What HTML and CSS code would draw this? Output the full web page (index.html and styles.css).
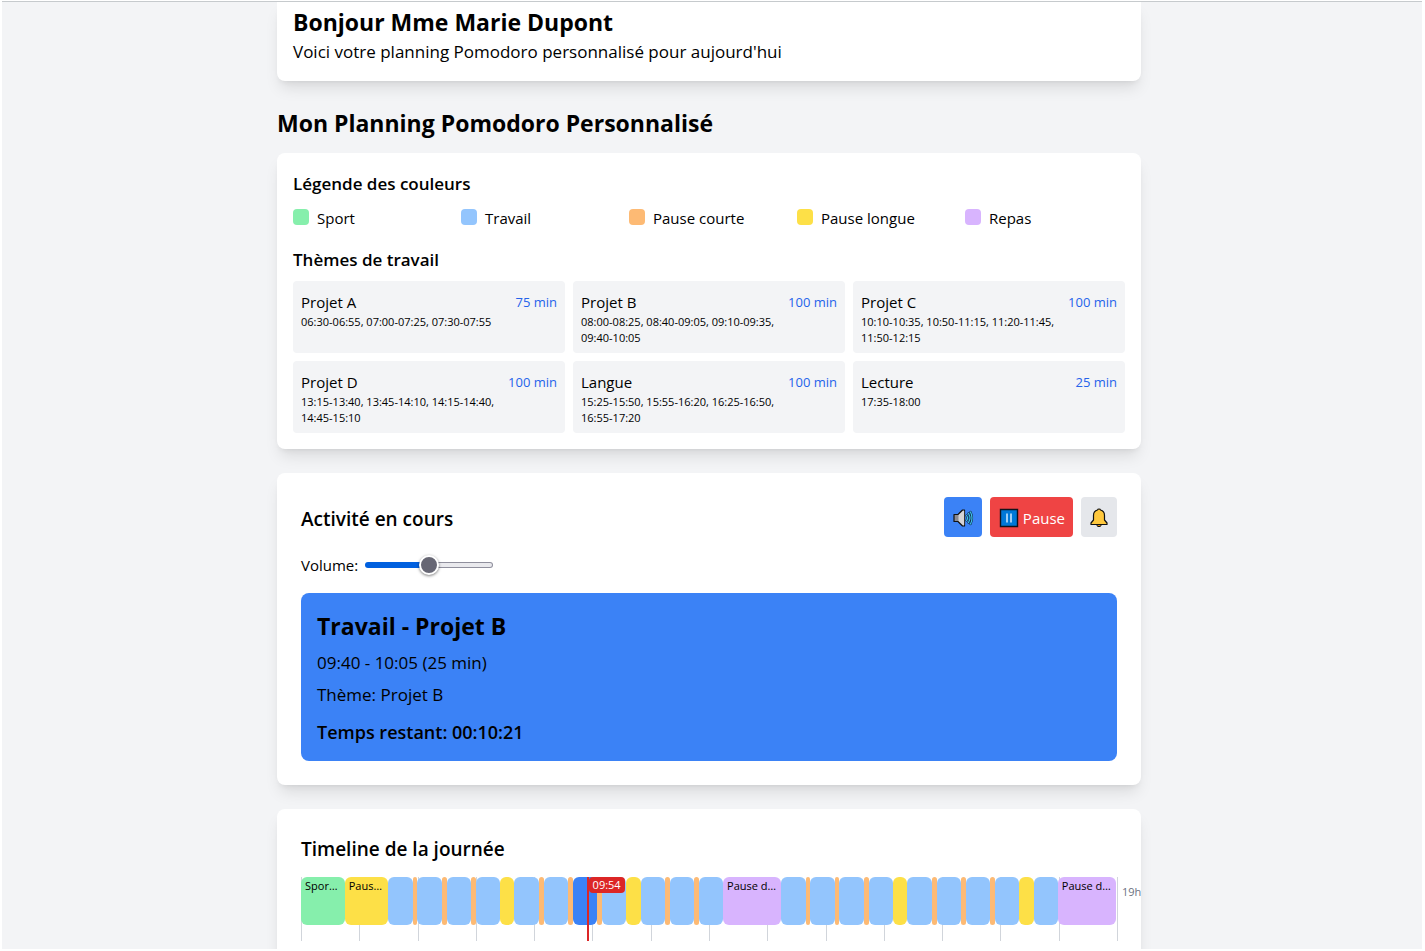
FILE: index.html
```html
<!DOCTYPE html>
<html lang="fr">
<head>
<meta charset="utf-8">
<title>Planning Pomodoro</title>
<meta name="viewport" content="width=device-width, initial-scale=1">
<link rel="stylesheet" href="styles.css">
</head>
<body>
<div class="page">
<main class="container">
  <header class="card welcome">
    <h1 class="title">Bonjour Mme Marie Dupont</h1>
    <p class="lead">Voici votre planning Pomodoro personnalisé pour aujourd'hui</p>
  </header>

  <h2 class="title page-title">Mon Planning Pomodoro Personnalisé</h2>

  <section class="card overview">
    <h3 class="subtitle">Légende des couleurs</h3>
    <ul class="legend">
      <li class="legend-item"><span class="swatch sport"></span><span class="legend-name">Sport</span></li>
      <li class="legend-item"><span class="swatch work"></span><span class="legend-name">Travail</span></li>
      <li class="legend-item"><span class="swatch short"></span><span class="legend-name">Pause courte</span></li>
      <li class="legend-item"><span class="swatch long"></span><span class="legend-name">Pause longue</span></li>
      <li class="legend-item"><span class="swatch meal"></span><span class="legend-name">Repas</span></li>
    </ul>
    <h3 class="subtitle">Thèmes de travail</h3>
    <div class="themes">
      <article class="theme"><div class="theme-head"><span>Projet A</span><span class="duration">75 min</span></div><p class="slots">06:30-06:55, 07:00-07:25, 07:30-07:55</p></article>
      <article class="theme"><div class="theme-head"><span>Projet B</span><span class="duration">100 min</span></div><p class="slots">08:00-08:25, 08:40-09:05, 09:10-09:35, 09:40-10:05</p></article>
      <article class="theme"><div class="theme-head"><span>Projet C</span><span class="duration">100 min</span></div><p class="slots">10:10-10:35, 10:50-11:15, 11:20-11:45, 11:50-12:15</p></article>
      <article class="theme"><div class="theme-head"><span>Projet D</span><span class="duration">100 min</span></div><p class="slots">13:15-13:40, 13:45-14:10, 14:15-14:40, 14:45-15:10</p></article>
      <article class="theme"><div class="theme-head"><span>Langue</span><span class="duration">100 min</span></div><p class="slots">15:25-15:50, 15:55-16:20, 16:25-16:50, 16:55-17:20</p></article>
      <article class="theme"><div class="theme-head"><span>Lecture</span><span class="duration">25 min</span></div><p class="slots">17:35-18:00</p></article>
    </div>
  </section>

  <section class="card panel">
    <div class="panel-head">
      <h3 class="heading">Activité en cours</h3>
      <div class="actions">
        <button class="btn btn-sound" type="button" aria-label="Son">
          <svg class="icon" viewBox="0 0 22 22" aria-hidden="true">
            <path d="M2 7.500h4l4.500-4.500h2v16h-2L6 14.500H2z" fill="#8b8a91" stroke="#111" stroke-width="1.200" stroke-linejoin="round"/>
            <path d="M6.500 8l4.500-4.300h1.200v14.600H11l-4.500-4.300z" fill="#d5d3d6"/>
            <path d="M14.500 8.500q2 2.500 0 5M16.500 6.500q3 4.500 0 9M18.500 5q3 6 0 12" fill="none" stroke="#0b2540" stroke-width="2.200" stroke-linecap="round"/>
            <path d="M14.500 8.500q2 2.500 0 5M16.500 6.500q3 4.500 0 9M18.500 5q3 6 0 12" fill="none" stroke="#40c4ee" stroke-width="1.200" stroke-linecap="round"/>
          </svg>
        </button>
        <button class="btn btn-pause" type="button">
          <svg class="icon" viewBox="0 0 22 22" aria-hidden="true">
            <path d="M2.500 2.500h17v17h-17z" fill="#0078d7" stroke="#10131c" stroke-width="1.400"/>
            <path d="M9 6.500v9M13 6.500v9" stroke="#d4ecff" stroke-width="1.500"/>
          </svg>
          Pause
        </button>
        <button class="btn btn-bell" type="button" aria-label="Notifications">
          <svg class="icon icon-bell" viewBox="1 1 20 20" aria-hidden="true">
            <path d="M8.500 17.500h5l-1.200 2H9.700z" fill="#d98b0b" stroke="#111" stroke-width="1"/>
            <path d="M11 2q1.300 0 1.500 1c3 .8 4 3 4 5.500v4.500l2.500 3v1.500H3V16l2.500-3V8.500c0-2.500 1-4.700 4-5.500Q9.700 2 11 2z" fill="#ffc83d" stroke="#111" stroke-width="1.200" stroke-linejoin="round"/>
          </svg>
        </button>
      </div>
    </div>
    <div class="volume">
      <label for="volume">Volume:</label>
      <input class="slider" id="volume" type="range" min="0" max="100" value="50">
    </div>
    <div class="current">
      <h4 class="title">Travail - Projet B</h4>
      <p class="lead">09:40 - 10:05 (25 min)</p>
      <p class="lead theme-line">Thème: Projet B</p>
      <p class="remaining">Temps restant: 00:10:21</p>
    </div>
  </section>

  <section class="card panel day">
    <h3 class="heading">Timeline de la journée</h3>
    <div class="timeline">
      <div class="hours">
        <i></i><i></i><i></i><i></i><i></i><i></i><i></i><i></i><i></i><i></i><i></i><i></i><i></i><i></i>
        <span class="last-hour">19h</span>
      </div>
      <div class="blocks">
        <div class="block sport m45">Sport matinal</div>
        <div class="block long m45">Pause longue</div>
        <div class="block work m25"></div><div class="block short m5"></div>
        <div class="block work m25"></div><div class="block short m5"></div>
        <div class="block work m25"></div><div class="block short m5"></div>
        <div class="block work m25"></div><div class="block long m15"></div>
        <div class="block work m25"></div><div class="block short m5"></div>
        <div class="block work m25"></div><div class="block short m5"></div>
        <div class="block active m25"></div><div class="block short m5"></div>
        <div class="block work m25"></div><div class="block long m15"></div>
        <div class="block work m25"></div><div class="block short m5"></div>
        <div class="block work m25"></div><div class="block short m5"></div>
        <div class="block work m25"></div>
        <div class="block meal m60">Pause déjeuner</div>
        <div class="block work m25"></div><div class="block short m5"></div>
        <div class="block work m25"></div><div class="block short m5"></div>
        <div class="block work m25"></div><div class="block short m5"></div>
        <div class="block work m25"></div><div class="block long m15"></div>
        <div class="block work m25"></div><div class="block short m5"></div>
        <div class="block work m25"></div><div class="block short m5"></div>
        <div class="block work m25"></div><div class="block short m5"></div>
        <div class="block work m25"></div><div class="block long m15"></div>
        <div class="block work m25"></div>
        <div class="block meal m60">Pause dîner</div>
      </div>
      <div class="now" style="left: 35%"><span class="now-label">09:54</span></div>
    </div>
  </section>
</main>
</div>
</body>
</html>
```
FILE: styles.css
```css
* { box-sizing: border-box; }

body {
  margin: 0;
  height: 100vh;
  padding: 1px 3px 2px 2px;
  overflow: hidden;
  background: #fff;
  color: #000;
  font: 15px/24px "Open Sans", "Noto Sans", sans-serif;
}

h1, h2, h3, h4, p, ul { margin: 0; padding: 0; }

.page {
  height: 100%;
  overflow: hidden;
  padding: 0 22px 0 16px;
  border-top: 1px solid #c6cacd;
  background: #f3f4f6;
}

.container { max-width: 864px; margin: 0 auto; }

.card {
  margin-bottom: 24px;
  border-radius: 8px;
  background: #fff;
  box-shadow: 0 10px 15px -3px rgba(0, 0, 0, .1), 0 4px 6px -4px rgba(0, 0, 0, .1);
}

.welcome { padding: 4px 16px 15px; border-radius: 0 0 8px 8px; }
.overview { padding: 17px 16px 16px; }
.panel { padding: 24px; }

.title { font-size: 23px; line-height: 32px; font-weight: 700; }
.lead { font-size: 17px; line-height: 28px; }
.subtitle { margin-bottom: 7px; font-size: 17px; line-height: 28px; font-weight: 600; }
.heading { font-size: 19px; line-height: 28px; font-weight: 600; }
.page-title { padding-top: 2px; margin-bottom: 14px; }

.legend {
  display: grid;
  grid-template-columns: repeat(5, 1fr);
  gap: 8px;
  margin-bottom: 17px;
  list-style: none;
}
.legend-item { display: flex; align-items: center; gap: 8px; height: 24px; }
.legend-name { padding-top: 2px; }
.swatch { width: 16px; height: 16px; border-radius: 4px; }

.sport { background: #86efac; }
.work { background: #93c5fd; }
.short { background: #fdba74; }
.long { background: #fde047; }
.meal { background: #d8b4fe; }
.active { background: #3b82f6; }

.themes { display: grid; grid-template-columns: repeat(3, 1fr); gap: 8px; }
.theme { min-height: 72px; padding: 9px 8px 7px; border-radius: 4px; background: #f3f4f6; }
.theme-head { display: flex; justify-content: space-between; }
.duration { color: #2563eb; font-size: 13px; }
.slots { padding-right: 48px; font-size: 11px; line-height: 16px; }

.panel-head { display: flex; justify-content: space-between; align-items: center; margin-bottom: 16px; }
.panel-head .heading { padding-top: 4px; }
.actions { display: flex; gap: 8px; }
.btn {
  display: flex;
  align-items: center;
  gap: 3px;
  height: 40px;
  padding: 2px 8px 0;
  border: 0;
  border-radius: 4px;
  font: inherit;
}
.btn-sound { background: #3b82f6; }
.btn-pause { background: #ef4444; color: #fff; }
.btn-bell { background: #e5e7eb; }
.icon { width: 22px; height: 22px; }
.icon-bell { width: 20px; height: 20px; }

.volume { display: flex; align-items: center; gap: 7px; margin-bottom: 16px; }
.slider {
  appearance: none;
  width: 128px;
  height: 20px;
  margin: 0;
  background: none;
}
.slider::-webkit-slider-runnable-track {
  height: 6px;
  border: 1px solid transparent;
  border-radius: 3px;
  background:
    linear-gradient(90deg, #0060df 50%, #e9e9ed 50%) padding-box,
    linear-gradient(90deg, #0060df 50%, #8f8f9d 50%) border-box;
}
.slider::-webkit-slider-thumb {
  appearance: none;
  width: 20px;
  height: 20px;
  margin-top: -8px;
  border: 2px solid #fff;
  border-radius: 50%;
  background: #676774;
  box-shadow: 0 1px 3px rgba(0, 0, 0, .5);
}

.current { padding: 17px 16px 15px; border-radius: 8px; background: #3b82f6; }
.current .title { margin-bottom: 7px; }
.theme-line { margin-top: 4px; }
.remaining { padding-top: 10px; font-size: 18px; line-height: 27px; font-weight: 600; }

.day { overflow: hidden; }
.day .heading { padding-top: 2px; margin-bottom: 14px; }
.timeline { position: relative; height: 128px; }
.hours {
  position: absolute;
  inset: 0 0 auto;
  display: grid;
  grid-template-columns: repeat(14, 1fr);
  height: 64px;
}
.hours i { border-left: 1px solid #d1d5db; }
.last-hour {
  position: absolute;
  left: 100%;
  height: 64px;
  padding: 7px 4px;
  border-left: 1px solid #d1d5db;
  color: #6b7280;
  font-size: 11px;
  line-height: 16px;
}

/* One grid column stands for five minutes, from 5h to 19h. */
.blocks {
  position: relative;
  display: grid;
  grid-template-columns: repeat(168, minmax(0, 1fr));
  height: 48px;
  margin-right: 1px;
}
.block {
  overflow: hidden;
  border-radius: 6px;
  font-size: 11px;
  line-height: 18px;
  text-overflow: ellipsis;
  white-space: nowrap;
}
.m5 { grid-column: span 1; }
.m15 { grid-column: span 3; }
.m25 { grid-column: span 5; }
.m45 { grid-column: span 9; padding: 0 4px; }
.m60 { grid-column: span 12; padding: 0 4px; }
.now { position: absolute; top: 0; height: 64px; border-left: 2px solid #dc2626; }
.now-label {
  display: block;
  padding: 0 4px;
  border-radius: 4px;
  background: #dc2626;
  color: #fff;
  font-size: 11px;
  line-height: 16px;
}
```
